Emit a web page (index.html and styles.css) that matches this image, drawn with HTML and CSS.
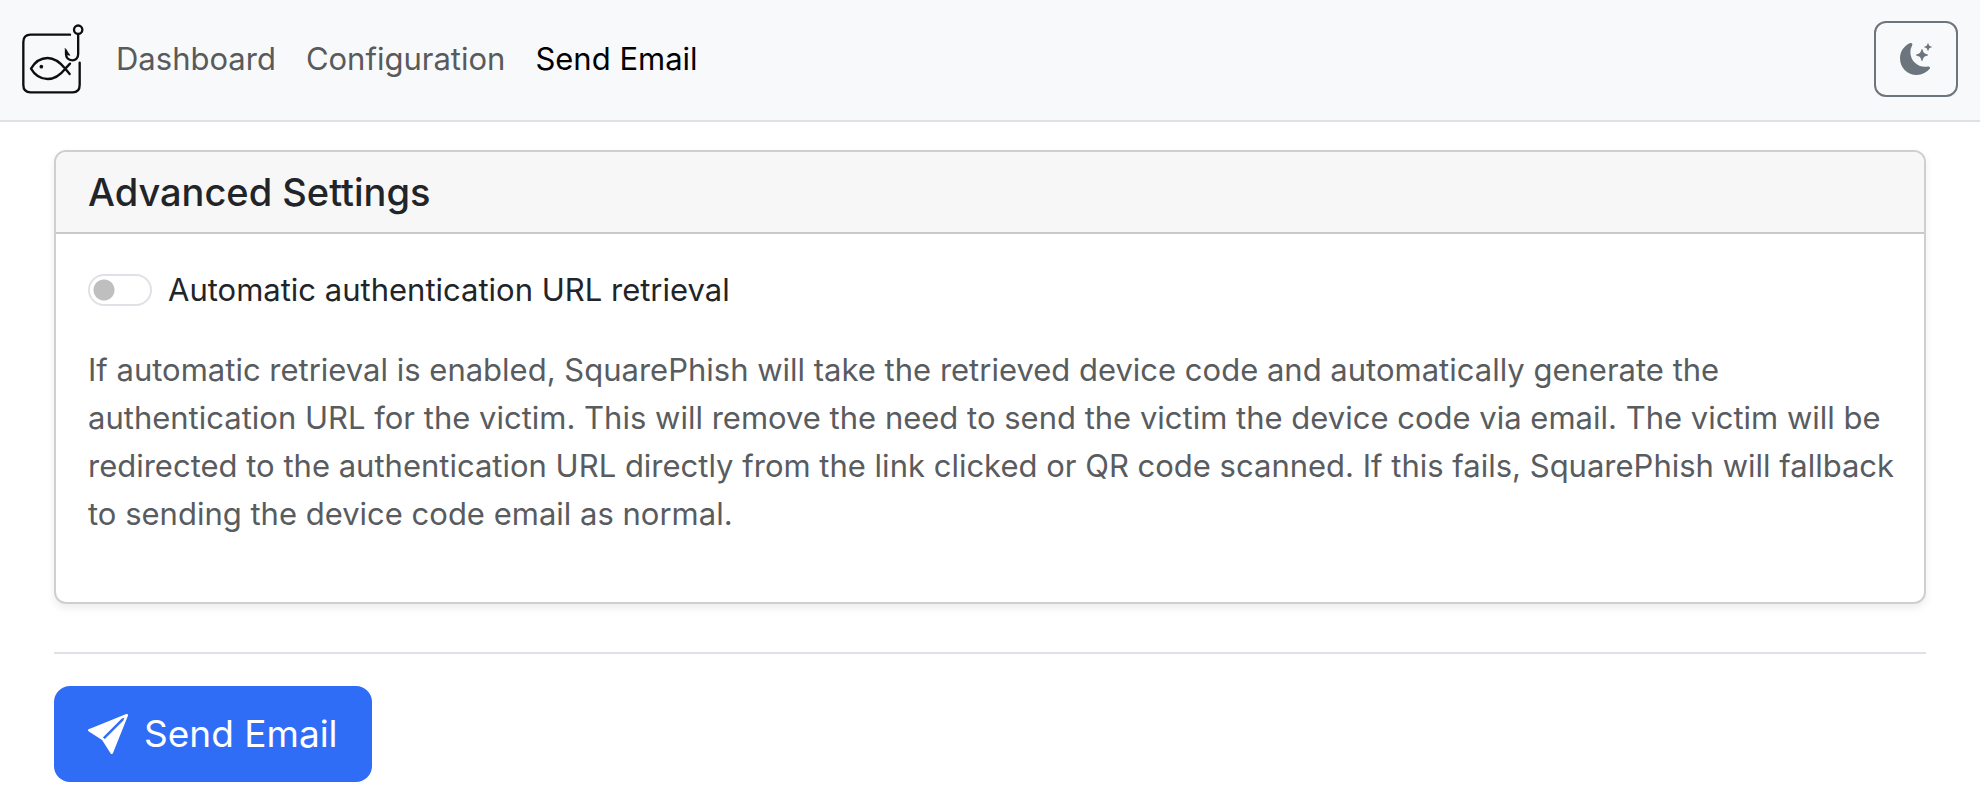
FILE: index.html
```html
<!DOCTYPE html>
<html lang="en">
<head>
<meta charset="utf-8">
<meta name="viewport" content="width=device-width, initial-scale=1">
<title>SquarePhish - Send Email</title>
<link rel="stylesheet" href="styles.css">
</head>
<body>
<header class="navbar">
  <a class="brand" href="#" aria-label="SquarePhish">
    <svg class="brand-logo" viewBox="60 66 198 222" fill="none" stroke="#0b0f0f" stroke-width="7" stroke-linecap="round" stroke-linejoin="round" aria-hidden="true">
      <path d="M210 104H92Q70 104 70 126V255Q70 277 92 277H218Q239 277 239 255V188"/>
      <circle cx="234.500" cy="89" r="12.500"/>
      <path d="M234.500 103V162C234.500 174 227 181 217 181C205 181 198 173 198 162V152"/>
      <path d="M196 146L210 166L199 164Z" fill="#0b0f0f" stroke-width="2"/>
      <path d="M210 191L196 206C180 226 164 237 143 237C122 237 104 225 93 206C104 187 122 174 143 174C164 174 180 187 196 206L209 222"/>
      <circle cx="124" cy="200" r="5.500" fill="#0b0f0f" stroke="none"/>
    </svg>
  </a>
  <nav class="nav-links" aria-label="Main">
    <a class="nav-link" href="#">Dashboard</a>
    <a class="nav-link" href="#">Configuration</a>
    <a class="nav-link nav-link-active" href="#" aria-current="page">Send Email</a>
  </nav>
  <button class="theme-toggle" type="button" aria-label="Toggle dark theme">
    <svg class="theme-icon" viewBox="0 0 16 16" fill="currentColor" aria-hidden="true">
      <path d="M6 .278a.77.77 0 0 1 .08.858 7.2 7.2 0 0 0-.878 3.46c0 4.021 3.278 7.277 7.318 7.277q.792-.001 1.533-.16a.79.79 0 0 1 .81.316.73.73 0 0 1-.031.893A8.35 8.35 0 0 1 8.344 16C3.734 16 0 12.286 0 7.710 0 4.266 2.114 1.312 5.124.06A.75.75 0 0 1 6 .278"/>
      <path d="M10.794 3.148a.217.217 0 0 1 .412 0l.387 1.162c.173.518.579.924 1.097 1.097l1.162.387a.217.217 0 0 1 0 .412l-1.162.387a1.730 1.730 0 0 0-1.097 1.097l-.387 1.162a.217.217 0 0 1-.412 0l-.387-1.162A1.730 1.730 0 0 0 9.310 6.593l-1.162-.387a.217.217 0 0 1 0-.412l1.162-.387a1.730 1.730 0 0 0 1.097-1.097zM13.863.099a.145.145 0 0 1 .274 0l.258.774c.115.346.386.617.732.732l.774.258a.145.145 0 0 1 0 .274l-.774.258a1.160 1.160 0 0 0-.732.732l-.258.774a.145.145 0 0 1-.274 0l-.258-.774a1.160 1.160 0 0 0-.732-.732l-.774-.258a.145.145 0 0 1 0-.274l.774-.258c.346-.115.617-.386.732-.732z"/>
    </svg>
  </button>
</header>
<main class="content">
  <section class="card">
    <h1 class="card-header">Advanced Settings</h1>
    <div class="card-body">
      <div class="switch-row">
        <input class="switch" type="checkbox" role="switch" id="auto-retrieval">
        <label for="auto-retrieval">Automatic authentication URL retrieval</label>
      </div>
      <p class="help-text">If automatic retrieval is enabled, SquarePhish will take the retrieved device code and automatically generate the authentication URL for the victim. This will remove the need to send the victim the device code via email. The victim will be redirected to the authentication URL directly from the link clicked or QR code scanned. If this fails, SquarePhish will fallback to sending the device code email as normal.</p>
    </div>
  </section>
  <hr class="divider">
  <button class="send-button" type="button">
    <svg class="send-icon" viewBox="0 0 16 16" fill="currentColor" aria-hidden="true">
      <path d="M15.964.686a.5.5 0 0 0-.65-.65L.767 5.855H.766l-.452.180a.5.5 0 0 0-.082.887l.41.26.001.002 4.995 3.178 3.178 4.995.002.002.26.41a.5.5 0 0 0 .886-.083zm-1.833 1.890L6.637 10.070l-.215-.338a.5.5 0 0 0-.154-.154l-.338-.215 7.494-7.494 1.178-.471z"/>
    </svg>
    Send Email
  </button>
</main>
</body>
</html>
```
FILE: styles.css
```css
* {
  box-sizing: border-box;
}

body {
  margin: 0;
  background: #fff;
  color: #212529;
  font-family: Inter, "Liberation Sans", sans-serif;
  font-size: 31px;
  line-height: 48px;
}

.navbar {
  display: flex;
  align-items: center;
  padding: 21px 22px 23px 20px;
  background: #f8f9fa;
  border-bottom: 2px solid #dee2e6;
}

.brand {
  display: flex;
  margin-right: 30px;
}

.brand-logo {
  width: 66px;
  height: 74px;
}

.nav-links {
  display: flex;
  gap: 30px;
}

.nav-link {
  color: #585a5b;
  text-decoration: none;
}

.nav-link-active {
  color: #000;
}

.theme-toggle {
  display: flex;
  align-items: center;
  margin-left: auto;
  padding: 20px 24px;
  border: 2px solid #6c757d;
  border-radius: 12px;
  background: transparent;
  color: #6c757d;
}

.theme-icon {
  width: 32px;
  height: 32px;
}

.content {
  padding: 28px 54px 16px;
}

.card {
  border: 2px solid #cfcfd0;
  border-radius: 12px;
  background: #fff;
  box-shadow: 0 4px 8px rgba(0, 0, 0, 0.075);
}

.card-header {
  margin: 0;
  padding: 16px 32px;
  border-bottom: 2px solid #c9c9ca;
  border-radius: 10px 10px 0 0;
  background: #f7f7f7;
  font-size: 38px;
  font-weight: 500;
  line-height: 48px;
}

.card-body {
  padding: 32px 20px 32px 32px;
}

.switch-row {
  display: flex;
  align-items: center;
  gap: 16px;
}

.switch {
  appearance: none;
  width: 64px;
  height: 32px;
  margin: 0;
  border: 2px solid #dee2e6;
  border-radius: 16px;
  background: radial-gradient(circle at 14px 14px, #bfbfbf 10px, transparent 11px);
}

.switch:checked {
  border-color: #306df6;
  background: radial-gradient(circle at 46px 14px, #fff 10px, #306df6 11px);
}

.help-text {
  margin: 32px 0;
  color: #595c5f;
}

.divider {
  margin: 48px 0 32px;
  border: 0;
  border-top: 2px solid #dee2e6;
}

.send-button {
  display: flex;
  align-items: center;
  gap: 16px;
  padding: 18px 34px;
  border: 0;
  border-radius: 16px;
  background: #306df6;
  color: #fff;
  font: 400 37px/60px Inter, "Liberation Sans", sans-serif;
}

.send-icon {
  width: 40px;
  height: 40px;
}
```
